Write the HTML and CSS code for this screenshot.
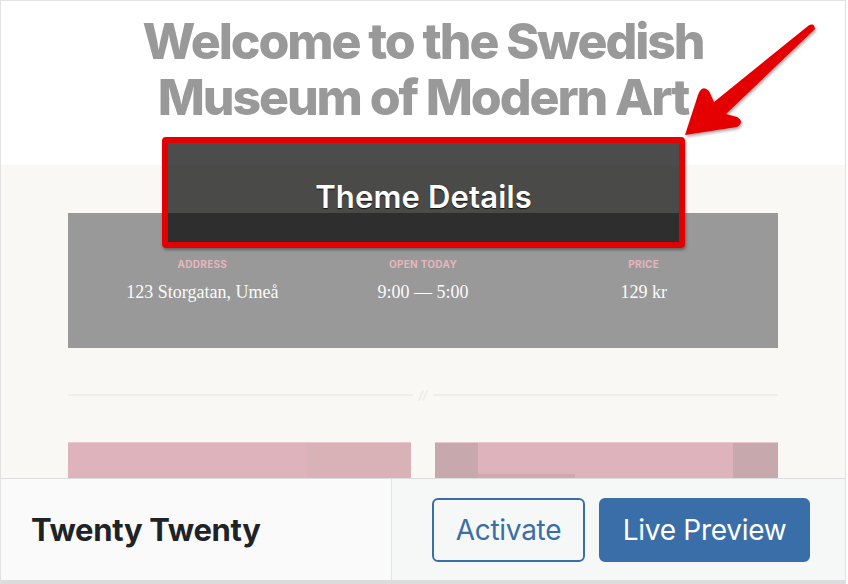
FILE: index.html
```html
<!DOCTYPE html>
<html lang="en">
<head>
<meta charset="utf-8">
<title>Twenty Twenty</title>
<link rel="stylesheet" href="styles.css">
</head>
<body>
<div class="card">
  <div class="shot">
    <header class="hero">
      <h1>Welcome to the Swedish<br>Museum of Modern Art</h1>
    </header>
    <section class="content">
      <div class="info">
        <div class="col"><span class="lbl">Address</span><span class="val">123 Storgatan, Umeå</span></div>
        <div class="col"><span class="lbl">Open Today</span><span class="val">9:00 — 5:00</span></div>
        <div class="col"><span class="lbl">Price</span><span class="val">129 kr</span></div>
      </div>
      <div class="divider"><span class="rule"></span><i>//</i><span class="rule"></span></div>
      <div class="tiles">
        <div class="tile t1"><span class="p1"></span><span class="p2"></span></div>
        <div class="tile t2"><span class="q1"></span><span class="q2"></span><span class="q3"></span></div>
      </div>
    </section>
  </div>
  <div class="overlay">Theme Details</div>
  <div class="bar">
    <div class="name">Twenty Twenty</div>
    <div class="actions">
      <button class="btn ghost">Activate</button>
      <button class="btn primary">Live Preview</button>
    </div>
  </div>
  <div class="annot"></div>
</div>
<svg class="arrow" viewBox="0 0 848 584" width="848" height="584" aria-hidden="true">
  <defs>
    <filter id="sh" x="-20%" y="-20%" width="140%" height="140%">
      <feDropShadow dx="1" dy="2" stdDeviation="1.5" flood-color="#000" flood-opacity="0.35"/>
    </filter>
  </defs>
  <path filter="url(#sh)" fill="#e40000" d="M685 135 L698 95 Q702 84 709 91 L714 102 L808 26 Q814 22 815 29 L726 114 L737 117 Q745 122 737 127 Z"/>
</svg>
</body>
</html>
```
FILE: styles.css
```css
* { box-sizing: border-box; }
html, body { margin: 0; padding: 0; background: #fff; }
body {
  width: 848px;
  height: 584px;
  overflow: hidden;
  position: relative;
  font-family: Inter, "Noto Sans", sans-serif;
}
.card {
  position: relative;
  width: 846px;
  border: 1px solid #e2e2e2;
  border-bottom: 4px solid #dcdcde;
}
.shot {
  height: 477px;
  overflow: hidden;
  background: #f9f8f4;
}
.hero {
  height: 164px;
  background: #fff;
  padding-top: 12px;
}
.hero h1 {
  margin: 0;
  text-align: center;
  font-family: Inter, sans-serif;
  font-weight: 800;
  font-size: 50px;
  line-height: 56px;
  letter-spacing: -0.042em;
  color: #999999;
}
.content {
  padding: 48px 67px 0;
}
.info {
  height: 135px;
  background: #999999;
  display: grid;
  grid-template-columns: repeat(3, 1fr);
  padding: 44px 24px 0;
}
.col {
  display: flex;
  flex-direction: column;
  align-items: center;
}
.lbl {
  font-family: Inter, sans-serif;
  font-weight: 700;
  font-size: 10px;
  line-height: 14px;
  letter-spacing: 0.03em;
  text-transform: uppercase;
  color: #e6b5bf;
  margin-bottom: 9px;
}
.val {
  font-family: "Liberation Serif", "DejaVu Serif", serif;
  font-size: 18px;
  line-height: 24px;
  color: #fbfbfb;
}
.divider {
  margin-top: 46px;
  display: flex;
  align-items: center;
  gap: 6px;
  height: 2px;
}
.rule {
  flex: 1;
  height: 2px;
  background: #efeee9;
}
.divider i {
  font-style: italic;
  font-size: 12px;
  color: #e8e7e2;
  line-height: 2px;
}
.tiles {
  margin-top: 46px;
  display: grid;
  grid-template-columns: 1fr 1fr;
  gap: 24px;
}
.tile {
  position: relative;
  height: 80px;
  background: #dfb3bb;
  border-top: 1px solid #e8c8ce;
}
.t1 .p1 {
  position: absolute; left: 239px; top: 0; right: 0; bottom: 0;
  background: #d9b2b8;
}
.t2 .q1 {
  position: absolute; left: 0; top: 0; width: 43px; bottom: 0;
  background: #c7a8ad;
}
.t2 .q2 {
  position: absolute; right: 0; top: 0; width: 45px; bottom: 0;
  background: #c7a8ad;
}
.t2 .q3 {
  position: absolute; left: 43px; top: 31px; width: 97px; height: 4px;
  background: #cfa9b0;
}
.overlay {
  position: absolute;
  left: 166px;
  top: 141px;
  width: 513px;
  height: 100px;
  background: rgba(0, 0, 0, 0.7);
  color: #fff;
  display: flex;
  align-items: center;
  justify-content: center;
  padding-top: 9px;
  font-family: Inter, sans-serif;
  font-weight: 600;
  font-size: 31px;
  letter-spacing: 0.005em;
  text-shadow: 0 1px 1px rgba(0, 0, 0, 0.8);
}
.annot {
  position: absolute;
  left: 161px;
  top: 136px;
  width: 523px;
  height: 111px;
  border: 6px solid #e20000;
  border-radius: 4px;
  box-shadow: 1px 2px 3px rgba(0, 0, 0, 0.35);
}
.bar {
  display: flex;
  height: 102px;
  border-top: 1px solid #dcdcde;
  background: #f6f7f7;
}
.name {
  width: 391px;
  background: #fafafa;
  border-right: 1px solid #e4e4e4;
  display: flex;
  align-items: center;
  padding-left: 30px;
  font-family: Inter, sans-serif;
  font-weight: 700;
  font-size: 31px;
  color: #1d2327;
  letter-spacing: -0.01em;
}
.actions {
  flex: 1;
  display: flex;
  align-items: center;
  justify-content: flex-end;
  gap: 14px;
  padding-right: 35px;
}
.btn {
  height: 64px;
  border-radius: 6px;
  font-family: Inter, sans-serif;
  font-size: 28px;
  font-weight: 400;
  letter-spacing: -0.01em;
  padding: 0;
  cursor: pointer;
}
.ghost {
  width: 153px;
  background: #f6f7f7;
  border: 2px solid #3a6ea8;
  color: #3a6ea8;
}
.primary {
  width: 211px;
  background: #3a6ea8;
  border: 2px solid #3a6ea8;
  color: #fff;
}
.arrow {
  position: absolute;
  left: 0;
  top: 0;
  pointer-events: none;
}
```
